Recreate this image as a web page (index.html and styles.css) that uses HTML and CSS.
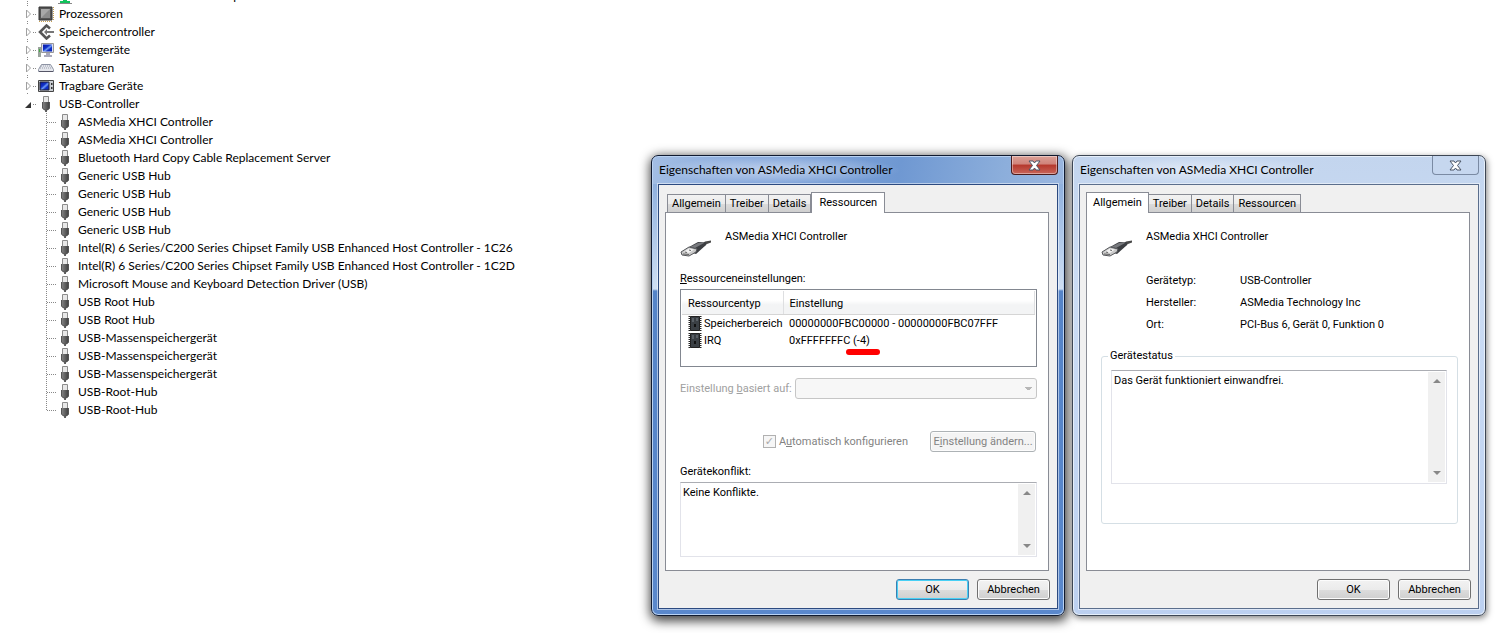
FILE: index.html
```html
<!DOCTYPE html>
<html lang="de">
<head>
  <meta charset="UTF-8" />
  <meta name="viewport" content="width=device-width, initial-scale=1.0"/>
  <title>Geräte-Manager</title>
  <link rel="stylesheet" href="styles.css">
</head>
<body>

  <!-- Shared icons -->
  <svg class="sprites" width="0" height="0">
    <defs>
      <linearGradient id="metal" x1="0" x2="1">
        <stop offset="0" stop-color="#8a8a8a"/>
        <stop offset="1" stop-color="#3a3a3a"/>
      </linearGradient>
      <linearGradient id="screen" x1="0" x2="1" y1="0" y2="1">
        <stop offset="0" stop-color="#0618a0"/>
        <stop offset="0.4" stop-color="#1030c8"/>
        <stop offset="0.55" stop-color="#6f9cf4"/>
        <stop offset="0.7" stop-color="#1030c8"/>
        <stop offset="1" stop-color="#0a28b4"/>
      </linearGradient>
    </defs>
    <symbol id="usb" viewBox="0 0 16 16">
      <path d="M5.5 0.5h5v6h-5z" fill="#e8e8e8" stroke="#8c8c8c"/>
      <path d="M4 6h8v6l-2 2H9v2H7v-2H6l-2-2z" fill="url(#metal)"/>
      <path d="M4.500 6v6l2 2h3l2-2V6" fill="none" stroke="#555"/>
    </symbol>
    <symbol id="plug" viewBox="0 0 32 32">
      <path d="M22 12L25 9.500L31 8.500V10.500L27 12L22 16z" fill="#4a4a4a"/>
      <path d="M9 15L18 10L26 10.500L26 13L16 22L10 20z" fill="#3c3e42"/>
      <path d="M10 15L18 11L24 11L15 16z" fill="#77797d"/>
      <path d="M1 20L9 15L17 17L16 20L9 24L2 23z" fill="#c9c9c9" stroke="#55575b"/>
      <path d="M4 19.500L9 16.500L14 17.500L9 21z" fill="#f2f2f2"/>
      <path d="M5 20l2 .5M9 18l2 .5M3 22l6 .5" stroke="#666" fill="none"/>
    </symbol>
    <symbol id="chip" viewBox="0 0 14 15">
      <path d="M1.500 0v15M12.500 0v15" stroke="#222" stroke-width="2" stroke-dasharray="1 1"/>
      <path d="M2.500 0.500h9v14h-9z" fill="#3a3f44" stroke="#222"/>
      <path d="M4 2h2v4H4zM8 2h2v3H8z" fill="#5a6066"/>
      <path d="M6 8h2v3H6z" fill="#111"/>
    </symbol>
    <symbol id="closed" viewBox="0 0 8 14">
      <path d="M2.500 3L6.500 7L2.500 11z" fill="#fff" stroke="#a0a0a0"/>
    </symbol>
    <symbol id="up" viewBox="0 0 8 4"><path d="M4 0l4 4H0z" fill="#888"/></symbol>
    <symbol id="down" viewBox="0 0 8 4"><path d="M0 0h8L4 4z" fill="#888"/></symbol>
    <symbol id="cross" viewBox="0 0 13 11">
      <path d="M1 1h4l1.500 2L8 1h4L8.500 5.500L12 10H8L6.500 8L5 10H1l3.500-4.500z" fill="#fff" stroke="#4b5566"/>
    </symbol>
  </svg>

  <div class="desktop">
    <ul class="tree">
      <li class="node child first"><i class="dots"></i>
        <svg class="icon" viewBox="0 0 16 16"><path d="M2 2h12v9H2z" fill="#7d8790"/><path d="M6 11h4v2h3v2H3v-2h3z" fill="#12c25c"/><path d="M1 15.500h14" stroke="#888"/></svg>
        <span>Microsoft Virtual WLAN-Miniport</span></li>
      <li class="node"><svg class="expander"><use href="#closed"/></svg><i class="dots"></i>
        <svg class="icon" viewBox="0 0 16 16"><path d="M1 15.500h14M15.500 1v14" stroke="#c8a050" stroke-dasharray="1 1"/><path d="M1 1h13v13H1z" fill="#555" stroke="#333"/><path d="M3 3h9v9H3z" fill="#a8a8a8"/><path d="M12 3v9H3z" fill="#8c8c8c"/></svg>
        <span>Prozessoren</span></li>
      <li class="node"><svg class="expander"><use href="#closed"/></svg><i class="dots"></i>
        <svg class="icon" viewBox="0 0 16 16"><path d="M12 4.500L8.500 1.500L2 8L8.500 14.500L12 11.500" fill="none" stroke="#555" stroke-width="2.600"/><path d="M6 8L9 5v2h7v2H9v2z" fill="#777"/></svg>
        <span>Speichercontroller</span></li>
      <li class="node"><svg class="expander"><use href="#closed"/></svg><i class="dots"></i>
        <svg class="icon" viewBox="0 0 16 16"><path d="M0 5h3v10H0z" fill="#9aa49c"/><path d="M1 7h1v3H1z" fill="#4a4"/><path d="M3.500 1.500h12v9h-12z" fill="#dde" stroke="#999"/><path d="M5 2.500h9v7H5z" fill="url(#screen)"/><path d="M8 11h4v2h2v2H6v-2h2z" fill="#aab"/></svg>
        <span>Systemgeräte</span></li>
      <li class="node"><svg class="expander"><use href="#closed"/></svg><i class="dots"></i>
        <svg class="icon" viewBox="0 0 16 16"><path d="M3.500 4.500h9l3 5v2h-15v-2z" fill="#e4e6ec" stroke="#8d93a3"/><path d="M3 6h10M2 8h12" stroke="#9a9fae" stroke-dasharray="1 1"/><path d="M1 11.500h14" stroke="#556" /></svg>
        <span>Tastaturen</span></li>
      <li class="node"><svg class="expander"><use href="#closed"/></svg><i class="dots"></i>
        <svg class="icon" viewBox="0 0 16 16"><path d="M.5 2.500h15v11H.5z" fill="#c9cdd2" stroke="#444"/><path d="M2 4h9v8H2z" fill="url(#screen)" stroke="#223"/><path d="M13 5h1.500v2H13zM13 9h1.500v2H13z" fill="#333"/></svg>
        <span>Tragbare Geräte</span></li>
      <li class="node open"><svg class="expander" viewBox="0 0 8 14"><path d="M7 5v6H1z" fill="#333"/></svg><i class="dots"></i>
        <svg class="icon"><use href="#usb"/></svg>
        <span>USB-Controller</span></li>
      <li class="node child"><i class="dots"></i><svg class="icon"><use href="#usb"/></svg><span>ASMedia XHCI Controller</span></li>
      <li class="node child"><i class="dots"></i><svg class="icon"><use href="#usb"/></svg><span>ASMedia XHCI Controller</span></li>
      <li class="node child"><i class="dots"></i><svg class="icon"><use href="#usb"/></svg><span>Bluetooth Hard Copy Cable Replacement Server</span></li>
      <li class="node child"><i class="dots"></i><svg class="icon"><use href="#usb"/></svg><span>Generic USB Hub</span></li>
      <li class="node child"><i class="dots"></i><svg class="icon"><use href="#usb"/></svg><span>Generic USB Hub</span></li>
      <li class="node child"><i class="dots"></i><svg class="icon"><use href="#usb"/></svg><span>Generic USB Hub</span></li>
      <li class="node child"><i class="dots"></i><svg class="icon"><use href="#usb"/></svg><span>Generic USB Hub</span></li>
      <li class="node child"><i class="dots"></i><svg class="icon"><use href="#usb"/></svg><span>Intel(R) 6 Series/C200 Series Chipset Family USB Enhanced Host Controller - 1C26</span></li>
      <li class="node child"><i class="dots"></i><svg class="icon"><use href="#usb"/></svg><span>Intel(R) 6 Series/C200 Series Chipset Family USB Enhanced Host Controller - 1C2D</span></li>
      <li class="node child"><i class="dots"></i><svg class="icon"><use href="#usb"/></svg><span>Microsoft Mouse and Keyboard Detection Driver (USB)</span></li>
      <li class="node child"><i class="dots"></i><svg class="icon"><use href="#usb"/></svg><span>USB Root Hub</span></li>
      <li class="node child"><i class="dots"></i><svg class="icon"><use href="#usb"/></svg><span>USB Root Hub</span></li>
      <li class="node child"><i class="dots"></i><svg class="icon"><use href="#usb"/></svg><span>USB-Massenspeichergerät</span></li>
      <li class="node child"><i class="dots"></i><svg class="icon"><use href="#usb"/></svg><span>USB-Massenspeichergerät</span></li>
      <li class="node child"><i class="dots"></i><svg class="icon"><use href="#usb"/></svg><span>USB-Massenspeichergerät</span></li>
      <li class="node child"><i class="dots"></i><svg class="icon"><use href="#usb"/></svg><span>USB-Root-Hub</span></li>
      <li class="node child last"><i class="dots"></i><svg class="icon"><use href="#usb"/></svg><span>USB-Root-Hub</span></li>
    </ul>

    <div class="dialogs">
      <!-- Resources dialog -->
      <div class="window active">
        <div class="titlebar">
          <h2>Eigenschaften von ASMedia XHCI Controller</h2>
          <button class="close" aria-label="Schließen"><svg width="13" height="11"><use href="#cross"/></svg></button>
        </div>
        <div class="client">
          <div class="tabs">
            <button class="tab">Allgemein</button>
            <button class="tab">Treiber</button>
            <button class="tab">Details</button>
            <button class="tab selected">Ressourcen</button>
          </div>
          <div class="panel">
            <div class="device">
              <svg width="32" height="32"><use href="#plug"/></svg>
              <span>ASMedia XHCI Controller</span>
            </div>
            <p class="caption"><u>R</u>essourceneinstellungen:</p>
            <div class="list">
              <table>
                <thead>
                  <tr><th>Ressourcentyp</th><th>Einstellung</th></tr>
                </thead>
                <tbody>
                  <tr><td><svg class="chip"><use href="#chip"/></svg>Speicherbereich</td><td>00000000FBC00000 - 00000000FBC07FFF</td></tr>
                  <tr><td><svg class="chip"><use href="#chip"/></svg>IRQ</td><td>0xFFFFFFFC <span class="marked">(-4)</span></td></tr>
                </tbody>
              </table>
            </div>
            <div class="based-on">
              <label for="config">Einstellung <u>b</u>asiert auf:</label>
              <select id="config" disabled></select>
            </div>
            <div class="auto">
              <input type="checkbox" id="auto" checked disabled>
              <label for="auto">A<u>u</u>tomatisch konfigurieren</label>
              <button class="btn" disabled>E<u>i</u>nstellung ändern...</button>
            </div>
            <label class="caption" for="conflict">Gerätekonflikt:</label>
            <div class="textbox conflict">
              <textarea id="conflict" readonly>Keine Konflikte.</textarea>
              <div class="scrollbar"><svg><use href="#up"/></svg><svg><use href="#down"/></svg></div>
            </div>
          </div>
          <div class="buttons">
            <button class="btn default">OK</button>
            <button class="btn">Abbrechen</button>
          </div>
        </div>
      </div>

      <!-- General dialog -->
      <div class="window">
        <div class="titlebar">
          <h2>Eigenschaften von ASMedia XHCI Controller</h2>
          <button class="close" aria-label="Schließen"><svg width="13" height="11"><use href="#cross"/></svg></button>
        </div>
        <div class="client">
          <div class="tabs">
            <button class="tab selected">Allgemein</button>
            <button class="tab">Treiber</button>
            <button class="tab">Details</button>
            <button class="tab">Ressourcen</button>
          </div>
          <div class="panel">
            <div class="device">
              <svg width="32" height="32"><use href="#plug"/></svg>
              <span>ASMedia XHCI Controller</span>
            </div>
            <dl class="facts">
              <dt>Gerätetyp:</dt><dd>USB-Controller</dd>
              <dt>Hersteller:</dt><dd>ASMedia Technology Inc</dd>
              <dt>Ort:</dt><dd>PCI-Bus 6, Gerät 0, Funktion 0</dd>
            </dl>
            <fieldset>
              <legend>Gerätestatus</legend>
              <div class="textbox status">
                <textarea aria-label="Gerätestatus" readonly>Das Gerät funktioniert einwandfrei.</textarea>
                <div class="scrollbar"><svg><use href="#up"/></svg><svg><use href="#down"/></svg></div>
              </div>
            </fieldset>
          </div>
          <div class="buttons">
            <button class="btn">OK</button>
            <button class="btn">Abbrechen</button>
          </div>
        </div>
      </div>
    </div>
  </div>

</body>
</html>
```
FILE: styles.css
```css
* {
  box-sizing: border-box;
  margin: 0;
  padding: 0;
}

body {
  background: #fff;
  color: #000;
  font-family: Roboto, Arial, sans-serif;
  font-size: 11px;
  line-height: 16px;
}

button, select, textarea, input {
  font: inherit;
  color: inherit;
}

.sprites {
  display: block;
}

.desktop {
  display: flex;
  justify-content: space-between;
  min-height: 100vh;
  overflow: hidden;
}

/* Device tree */
.tree {
  list-style: none;
  margin-top: -13px;
  font-family: Lato, "Segoe UI", sans-serif;
  font-size: 12px;
  white-space: nowrap;
}

.node {
  display: flex;
  align-items: center;
  height: 18px;
  padding-left: 24px;
  background: linear-gradient(#888 50%, transparent 50%) 27px 0 / 1px 2px repeat-y;
}

.node.open {
  background: none;
}

.node.child {
  padding-left: 47px;
  background: linear-gradient(#888 50%, transparent 50%) 46px 0 / 1px 2px repeat-y;
}

.node.first {
  background: linear-gradient(#888 50%, transparent 50%) 27px 0 / 1px 2px repeat-y;
}

.node.last {
  background: linear-gradient(#fff, #fff) 46px 10px / 1px 8px no-repeat,
    linear-gradient(#888 50%, transparent 50%) 46px 0 / 1px 2px repeat-y;
}

.expander {
  width: 8px;
  height: 14px;
  background: #fff;
}

.dots {
  width: 4px;
  height: 1px;
  margin: 0 1px;
  background: linear-gradient(to right, #888 50%, transparent 50%) 0 0 / 2px 1px repeat-x;
}

.child .dots {
  width: 9px;
  margin: 0 1px 0 0;
}

.icon {
  width: 16px;
  height: 16px;
  margin-right: 5px;
}

/* Windows */
.dialogs {
  display: flex;
  align-items: flex-start;
  gap: 7px;
  padding: 155px 21px 0 0;
}

.window {
  width: 414px;
  padding: 0 6px 6px;
  border: 1px solid #3d4654;
  border-radius: 7px;
  background: linear-gradient(to bottom, #c3d5ee, #cbdcf4 30%, #bcd0f0);
  box-shadow: inset 0 0 0 1px #e6effa, 1px 2px 6px rgba(0, 0, 0, 0.5);
}

.window.active {
  border-color: #101a30;
  background: linear-gradient(100deg, #a3bee4, #86a8dc 25%, #6f98d2 60%, #8caedb 85%, #9ab6df) 0 0 / 100% 28px no-repeat,
    linear-gradient(to bottom, #8fb0de 28px, #cfdff3 133px, #5584c8 135px, #5a88cc);
  box-shadow: inset 0 0 0 1px #b9d2f2, 1px 3px 11px 2px rgba(0, 0, 0, 0.75);
}

.titlebar {
  display: flex;
  justify-content: space-between;
  align-items: flex-start;
  height: 28px;
}

.titlebar h2 {
  padding: 0 8px 0 1px;
  font-family: Lato, "Segoe UI", sans-serif;
  font-size: 12px;
  font-weight: normal;
  line-height: 28px;
  background: radial-gradient(closest-side, rgba(255, 255, 255, 0.5), rgba(255, 255, 255, 0));
}

.close {
  display: flex;
  align-items: center;
  justify-content: center;
  width: 47px;
  height: 19px;
  border: 1px solid #7a8aa3;
  border-top: none;
  border-radius: 0 0 4px 4px;
  background: #c6d7ef;
}

.active .close {
  border-color: #4b1b1b;
  background: linear-gradient(#dba096, #d0837a 45%, #b5382c 50%, #c8655a);
  box-shadow: inset 0 0 0 1px rgba(255, 255, 255, 0.4);
}

.client {
  padding: 7px 7px 8px 6px;
  border: 1px solid #5b6e8c;
  background: #f0f0f0;
  box-shadow: 0 0 0 1px rgba(255, 255, 255, 0.5);
}

.active .client {
  border-color: #2c4a80;
}

/* Tabs */
.tabs {
  display: flex;
  align-items: flex-end;
  height: 21px;
  margin-bottom: -1px;
  padding-left: 2px;
}

.tab {
  height: 19px;
  padding: 1px 4px 0;
  border: 1px solid #898c95;
  border-left-width: 0;
  background: linear-gradient(#f2f2f2, #ebebeb 50%, #dcdcdc 50%, #cfcfcf);
}

.tab:first-child {
  border-left-width: 1px;
}

.tab.selected {
  position: relative;
  height: 21px;
  padding: 0 6px 1px;
  border-left-width: 1px;
  border-bottom: none;
  background: #fff;
}

.tab.selected:first-child {
  margin-left: -2px;
}

.tab.selected:last-child {
  padding: 0 7px 1px;
}

.panel {
  height: 359px;
  margin-right: 1px;
  padding: 16px 11px 0 14px;
  border: 1px solid #898c95;
  background: #fff;
}

.device {
  display: flex;
  gap: 13px;
  height: 36px;
}

.device svg {
  margin-top: 3px;
}

.caption {
  display: block;
  margin: 6px 0 2px;
}

.list {
  height: 78px;
  padding: 1px;
  border: 1px solid #828790;
}

table {
  width: 100%;
  border-collapse: collapse;
}

th {
  height: 23px;
  padding: 4px 6px 0;
  border-right: 1px solid #dedfe1;
  border-bottom: 1px solid #d5d5d5;
  background: linear-gradient(#fff 40%, #f3f4f5 60%);
  font-weight: normal;
  text-align: left;
}

th:first-child {
  width: 101px;
}

td {
  height: 17px;
  padding: 1px 6px 0;
  line-height: 16px;
  white-space: nowrap;
}

td:first-child {
  padding-right: 0;
}

.chip {
  width: 14px;
  height: 15px;
  margin-right: 2px;
  vertical-align: top;
}

.marked {
  position: relative;
}

.marked::after {
  content: "";
  position: absolute;
  left: -7px;
  top: 15px;
  width: 34px;
  height: 6px;
  border-radius: 3px;
  background: #f00;
}

.based-on {
  display: flex;
  align-items: center;
  justify-content: space-between;
  margin-top: 11px;
  color: #a0a0a0;
}

select {
  appearance: none;
  width: 242px;
  height: 21px;
  border: 1px solid #afafaf;
  border-radius: 3px;
  background: linear-gradient(to bottom right, #999 50%, transparent 50%) 233px 8px / 4px 4px no-repeat,
    linear-gradient(to bottom left, #999 50%, transparent 50%) 229px 8px / 4px 4px no-repeat, #f4f4f4;
}

.auto {
  display: flex;
  align-items: center;
  justify-content: flex-end;
  margin-top: 32px;
  color: #838383;
}

.auto input {
  appearance: none;
  width: 13px;
  height: 13px;
  margin-right: 3px;
  border: 1px solid #b1b1b1;
  background: #f6f6f6;
}

.auto input::before {
  content: "✓";
  display: block;
  font: bold 11px/11px "DejaVu Sans", sans-serif;
  text-align: center;
  color: #aaa;
}

.btn {
  width: 73px;
  height: 21px;
  padding-top: 1px;
  border: 1px solid #707070;
  border-radius: 3px;
  background: linear-gradient(#f2f2f2, #ebebeb 50%, #dddddd 50%, #cfcfcf);
  box-shadow: inset 0 0 0 1px #fcfcfc;
}

.btn.default {
  border-color: #3c7fb1;
  box-shadow: inset 0 0 0 1px #48d0f5;
}

.btn:disabled {
  width: 106px;
  margin: 0 1px 0 22px;
  border-color: #adb2b5;
  background: #f4f4f4;
  color: #838383;
}

.auto + .caption {
  margin-top: 12px;
}

.textbox {
  display: flex;
  padding: 1px;
  border: 1px solid #e2e3ea;
  border-top-color: #abadb3;
}

.textbox.conflict {
  height: 75px;
}

.textbox.status {
  height: 114px;
}

textarea {
  flex: 1;
  padding: 1px 1px 0;
  border: none;
  outline: none;
  resize: none;
  overflow: hidden;
  background: transparent;
}

.scrollbar {
  display: flex;
  flex-direction: column;
  justify-content: space-between;
  align-items: center;
  width: 17px;
  padding: 7px 0;
  background: #f0f0f0;
}

.scrollbar svg {
  width: 8px;
  height: 4px;
}

.facts {
  display: grid;
  grid-template-columns: 94px 1fr;
  gap: 6px 0;
  margin: 8px 0 15px 45px;
}

fieldset {
  height: 176px;
  padding: 6px 10px 0 9px;
  border: 1px solid #d5dfe5;
  border-radius: 3px;
}

legend {
  margin-left: -3px;
  padding: 0 2px;
}

.buttons {
  display: flex;
  justify-content: flex-end;
  gap: 8px;
  margin-top: 8px;
}
```
